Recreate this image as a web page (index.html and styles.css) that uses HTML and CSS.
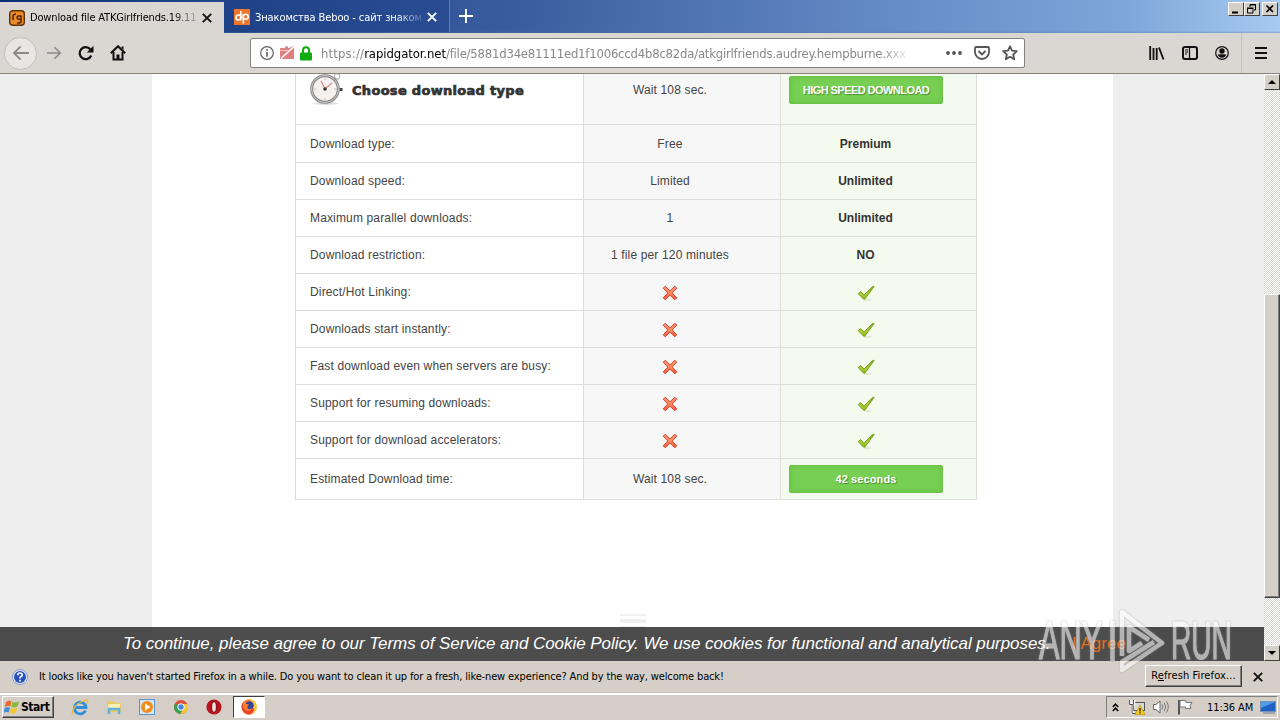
FILE: index.html
```html
<!DOCTYPE html>
<html lang="en">
<head>
<meta charset="utf-8">
<title>Download file</title>
<link rel="stylesheet" href="styles.css">
</head>
<body>
<svg class="defs" width="0" height="0" aria-hidden="true">
  <defs>
    <linearGradient id="redGrad" x1="0" y1="0" x2="0" y2="1"><stop offset="0" stop-color="#f58a6e"/><stop offset="0.5" stop-color="#ff8a62"/><stop offset="1" stop-color="#f0502c"/></linearGradient>
    <linearGradient id="greenGrad" x1="0" y1="0" x2="0" y2="1"><stop offset="0" stop-color="#7ea32c"/><stop offset="0.6" stop-color="#a8d030"/><stop offset="1" stop-color="#86b41c"/></linearGradient>
    <symbol id="cross" viewBox="0 0 16 16"><path d="M3.200 1.200 8 5.800 12.800 1.200 14.800 3.200 10.200 8 14.800 12.800 12.800 14.800 8 10.200 3.200 14.800 1.200 12.800 5.800 8 1.200 3.200z" fill="url(#redGrad)" stroke="#cf4d34" stroke-linejoin="round"/></symbol>
    <symbol id="check" viewBox="0 0 18 16"><path d="M7 15h7" stroke="#cfd6c6"/><path d="M1.200 8.600 3.600 6.600 7 10 15.600 1.400h1.600L7.800 14.200H6.600z" fill="url(#greenGrad)" stroke="#7fa428" stroke-linejoin="round"/></symbol>
  </defs>
</svg>
<div class="screen">
  <header class="tabs">
    <div class="tab tab-active">
      <svg width="16" height="16" viewBox="0 0 16 16"><rect x=".7" y=".7" width="14.6" height="14.6" rx="3" fill="#f08a24" stroke="#5a3210" stroke-width="1.4"/><path d="M4 10V6.500Q4 4 7 4M12.500 6H9.500Q8 6 8 7.500T9.500 9.200H12V6.500V11.500Q12 13 10 13H8" fill="none" stroke="#4a2a10" stroke-width="1.500"/></svg>
      <span class="tab-title t1">Download file ATKGirlfriends.19.11</span>
      <svg class="tab-x" width="10" height="10" viewBox="0 0 10 10"><path d="M.8.800 9.200 9.200M9.200.800.800 9.200" stroke="#111" stroke-width="1.900"/></svg>
    </div>
    <div class="tab tab-back">
      <svg width="16" height="16" viewBox="0 0 16 16"><rect width="16" height="16" fill="#f0752c"/><path d="M6.800 2v9.500M9.300 5v9.500" stroke="#fff" stroke-width="1.600"/><circle cx="4.400" cy="8.500" r="2.500" fill="none" stroke="#fff" stroke-width="1.600"/><circle cx="11.700" cy="7.800" r="2.500" fill="none" stroke="#fff" stroke-width="1.600"/></svg>
      <span class="tab-title t2">Знакомства Beboo - сайт знаком</span>
      <svg class="tab-x" width="10" height="10" viewBox="0 0 10 10"><path d="M.8.800 9.200 9.200M9.200.800.800 9.200" stroke="#fff" stroke-width="1.900"/></svg>
    </div>
    <svg class="plus" width="14" height="14" viewBox="0 0 14 14"><path d="M7 0v14M0 7h14" stroke="#fff" stroke-width="2"/></svg>
    <div class="winbtns">
      <span class="wb"><svg width="14" height="12" viewBox="0 0 14 12"><path d="M3 9.500h6" stroke="#000" stroke-width="2"/></svg></span>
      <span class="wb"><svg width="14" height="12" viewBox="0 0 14 12"><path d="M5 4V1.500h5.500V7H9M5 2h6" fill="none" stroke="#000"/><path d="M2.500 5.500H8V10H2.500zM2 5h6.500" fill="none" stroke="#000"/></svg></span>
      <span class="wb wb-close"><svg width="14" height="12" viewBox="0 0 14 12"><path d="M3.500 2.500 10 9M10 2.500 3.500 9" stroke="#000" stroke-width="1.700"/></svg></span>
    </div>
  </header>

  <div class="toolbar">
    <div class="navs">
      <span class="back"><svg width="18" height="16" viewBox="0 0 18 16"><path d="M17 8H2M8.500 1.500 2 8l6.500 6.500" fill="none" stroke="#8b8b88" stroke-width="1.800"/></svg></span>
      <svg width="16" height="16" viewBox="0 0 18 16"><path d="M1 8h15M9.500 1.500 16 8l-6.500 6.500" fill="none" stroke="#8d8b88" stroke-width="1.900"/></svg>
      <svg width="16" height="16" viewBox="0 0 16 16"><path d="M13.200 10.500A6 6 0 1 1 12.300 4.300" fill="none" stroke="#111" stroke-width="2.200"/><path d="M15.500.800V7.500H8.800z" fill="#111"/></svg>
      <svg width="16" height="16" viewBox="0 0 16 16"><path d="M.8 8.300 8 1.200l7.200 7.100" fill="none" stroke="#111" stroke-width="2"/><path d="M11.500 1.500H13.500V5L11.500 3z" fill="#111"/><path d="M3.500 7V14.500H12.500V7" fill="none" stroke="#111" stroke-width="2"/><path d="M6.500 14.500V9.500h3v5z" fill="#111"/></svg>
    </div>
    <div class="urlbar">
      <svg width="14" height="14" viewBox="0 0 14 14"><circle cx="7" cy="7" r="6.300" fill="none" stroke="#606060" stroke-width="1.200"/><path d="M7 6v4.800M7 3v1.800" stroke="#606060" stroke-width="1.600"/></svg>
      <svg width="14" height="14" viewBox="0 0 14 14"><path d="M0 2h5V0.500h3V2H9l3-1.500L14 0V13H0z" fill="#e08080"/><path d="M1 12.500 14 .5" stroke="#fff" stroke-width="1.500"/><path d="M0 4.500h9" stroke="#f3c5c5"/></svg>
      <svg width="12" height="15" viewBox="0 0 12 15"><path d="M3 7V4.200a3 3 0 0 1 6 0V7" fill="none" stroke="#12ac12" stroke-width="2"/><rect y="6.500" width="12" height="8" rx="1" fill="#12ac12"/></svg>
      <span class="url"><span class="u1">https://</span><span class="u2">rapidgator.net</span><span class="u3">/file/5881d34e81111ed1f1006ccd4b8c82da/atkgirlfriends.audrey.hempburne.xxx</span></span>
      <span class="url-icons">
        <svg width="16" height="4" viewBox="0 0 16 4"><circle cx="2" cy="2" r="1.900" fill="#555"/><circle cx="8" cy="2" r="1.900" fill="#555"/><circle cx="14" cy="2" r="1.900" fill="#555"/></svg>
        <svg width="16" height="14" viewBox="0 0 16 14"><path d="M2 1h12q1 0 1 1v4a7 7 0 0 1-14 0V2q0-1 1-1z" fill="none" stroke="#555" stroke-width="1.800"/><path d="M4.500 5 8 8.500 11.500 5" fill="none" stroke="#555" stroke-width="1.800"/></svg>
        <svg width="16" height="16" viewBox="0 0 16 16"><path d="M8 1.300 10 5.700l4.800.5-3.600 3.300 1 4.800L8 11.800l-4.200 2.500 1-4.800L1.200 6.200 6 5.700z" fill="none" stroke="#555" stroke-width="1.800" stroke-linejoin="round"/></svg>
      </span>
    </div>
    <div class="tools">
      <svg width="16" height="14" viewBox="0 0 16 14"><path d="M1.200 0v14M4.500 2v12M7.700 2v12M10 1.500 14.500 13.500" stroke="#111" stroke-width="1.800"/></svg>
      <svg width="16" height="14" viewBox="0 0 16 14"><rect x="1" y="1" width="14" height="12" rx="2" fill="none" stroke="#111" stroke-width="2"/><path d="M7.500 1v12" stroke="#111" stroke-width="1.300"/><path d="M3 4h3M3 6h3M3 8h2" stroke="#111"/></svg>
      <svg width="14" height="14" viewBox="0 0 14 14"><circle cx="7" cy="7" r="6.300" fill="none" stroke="#111" stroke-width="1.200"/><circle cx="7" cy="5" r="2.700" fill="#111"/><path d="M2.700 8.500Q7 8 11.300 8.500 10 11.800 7 11.800T2.700 8.500z" fill="#111"/></svg>
      <i class="tool-sep"></i>
      <svg width="12" height="12" viewBox="0 0 12 12"><path d="M0 1h12M0 6h12M0 11h12" stroke="#111" stroke-width="2"/></svg>
    </div>
  </div>

  <div class="viewport">
    <main class="page">
      <div class="sheet">
        <div class="table">
          <div class="row row-head">
            <div class="c1 head-cell">
              <svg width="34" height="32" viewBox="0 0 34 32"><ellipse cx="16" cy="29.500" rx="12" ry="1.500" fill="#ddd"/><circle cx="27" cy="2.500" r="2.800" fill="none" stroke="#bbb" stroke-width="1.200"/><path d="m24 7 2-3" stroke="#999" stroke-width="2"/><rect x="29.500" y="14" width="3" height="3" fill="#444"/><circle cx="15" cy="15" r="13.300" fill="#f5f1ef" stroke="#8b8b8b" stroke-width="3"/><circle cx="15" cy="15" r="13.500" fill="none" stroke="#c8c8c8" stroke-width="1"/><path d="M15 4v2M15 24v2M4 15h2M24 15h2" stroke="#bbb"/><path d="M15 15 11 7M15 15l7-6" stroke="#d88" stroke-width="1.200"/><circle cx="15" cy="15" r="1.800" fill="#333"/></svg>
              <h2>Choose download type</h2>
            </div>
            <div class="c2"><span>Wait 108 sec.</span></div>
            <div class="c3"><span class="btn btn-hs">HIGH SPEED DOWNLOAD</span></div>
          </div>
          <div class="row row-first"><div class="c1">Download type:</div><div class="c2">Free</div><div class="c3">Premium</div></div>
          <div class="row"><div class="c1">Download speed:</div><div class="c2">Limited</div><div class="c3">Unlimited</div></div>
          <div class="row"><div class="c1">Maximum parallel downloads:</div><div class="c2">1</div><div class="c3">Unlimited</div></div>
          <div class="row"><div class="c1">Download restriction:</div><div class="c2">1 file per 120 minutes</div><div class="c3">NO</div></div>
          <div class="row"><div class="c1">Direct/Hot Linking:</div><div class="c2"><svg class="mark"><use href="#cross"/></svg></div><div class="c3"><svg class="mark mark-ok"><use href="#check"/></svg></div></div>
          <div class="row"><div class="c1">Downloads start instantly:</div><div class="c2"><svg class="mark"><use href="#cross"/></svg></div><div class="c3"><svg class="mark mark-ok"><use href="#check"/></svg></div></div>
          <div class="row"><div class="c1">Fast download even when servers are busy:</div><div class="c2"><svg class="mark"><use href="#cross"/></svg></div><div class="c3"><svg class="mark mark-ok"><use href="#check"/></svg></div></div>
          <div class="row"><div class="c1">Support for resuming downloads:</div><div class="c2"><svg class="mark"><use href="#cross"/></svg></div><div class="c3"><svg class="mark mark-ok"><use href="#check"/></svg></div></div>
          <div class="row"><div class="c1">Support for download accelerators:</div><div class="c2"><svg class="mark"><use href="#cross"/></svg></div><div class="c3"><svg class="mark mark-ok"><use href="#check"/></svg></div></div>
          <div class="row row-last"><div class="c1">Estimated Download time:</div><div class="c2">Wait 108 sec.</div><div class="c3"><span class="btn">42 seconds</span></div></div>
        </div>
        <div class="stripes"><i class="thin"></i><i></i><i class="tall"></i></div>
      </div>
      <div class="cookie"><span class="cookie-text">To continue, please agree to our Terms of Service and Cookie Policy. We use cookies for functional and analytical purposes.</span><span class="agree">I Agree</span></div>
    </main>
    <div class="scroll">
      <span class="sb"><svg width="8" height="4" viewBox="0 0 8 4"><path d="M0 4 4 0l4 4z"/></svg></span>
      <span class="track"></span>
      <span class="thumb"></span>
      <span class="track track-low"></span>
      <span class="sb"><svg width="8" height="4" viewBox="0 0 8 4"><path d="M0 0h8L4 4z"/></svg></span>
    </div>
    <div class="watermark">
      <span class="wm-any">ANY</span>
      <svg width="56" height="66" viewBox="0 0 56 66"><g fill="none" stroke="#fff" stroke-linejoin="round"><path d="M3.500 13V53" stroke-width="4.500"/><path d="M40 32 20 19V43L33 35M13 48V4L53 35 13 62V54L45 34" stroke-width="4.500"/></g></svg>
      <span class="wm-run">RUN</span>
    </div>
  </div>

  <div class="notice">
    <svg width="16" height="16" viewBox="0 0 16 16"><circle cx="8" cy="8" r="7.500" fill="#e4ebf8" stroke="#7f98cf"/><circle cx="8" cy="8" r="6" fill="#2750bd"/><path d="M5.800 6.300Q5.800 4 8 4t2.200 2.200Q10.200 7.300 8 8.300V9.500M8 10.700v1.700" fill="none" stroke="#fff" stroke-width="1.700"/></svg>
    <span class="notice-text">It looks like you haven't started Firefox in a while. Do you want to clean it up for a fresh, like-new experience? And by the way, welcome back!</span>
    <span class="refresh"><span>R<u>e</u>fresh Firefox...</span></span>
    <svg class="notice-x" width="10" height="10" viewBox="0 0 10 10"><path d="M.8.800 9.200 9.200M9.200.800.800 9.200" stroke="#111" stroke-width="1.900"/></svg>
  </div>

  <footer class="taskbar">
    <span class="start"><svg width="16" height="16" viewBox="0 0 16 16"><path d="M2 3Q5 1 7.500 2.500L6.300 7.500Q4 6.500.800 8z" fill="#ee6a2c"/><path d="M8.500 3Q11 4.300 15 2.500L13.500 7.500Q10.500 9 7.300 7.800z" fill="#86b93a"/><path d="M.6 9Q3.500 7.500 6 8.700L4.800 13.500Q2.500 12.500 0 13.800z" fill="#3e8fd8"/><path d="M7 9Q10 10 13.200 8.700L12 13.500Q9 15.500 5.800 14z" fill="#f6c52e"/></svg>Start</span>
    <span class="quick">
      <svg width="18" height="18" viewBox="0 0 18 18"><path d="M14.500 12.500A5.800 5.800 0 1 1 15 9.500H5" fill="none" stroke="#2f8fdc" stroke-width="2.800"/><path d="M2 15.500Q0 17 2.500 11T15 2q3-.5 1 4" fill="none" stroke="#e9bd3a" stroke-width="1.300"/></svg>
      <svg width="18" height="18" viewBox="0 0 18 18"><path d="M2 3h6l1 2h7v9H2z" fill="#eacb62"/><path d="M3 6h12v5H3z" fill="#faf0b0"/><path d="M4 16v-5h10v5" fill="none" stroke="#62b1e0" stroke-width="2.500"/></svg>
      <svg width="18" height="18" viewBox="0 0 18 18"><rect x="1.500" y="1.500" width="15" height="15" fill="#d2e6f6" stroke="#5795cc"/><circle cx="9" cy="9" r="6" fill="#f28c1c"/><path d="M7 5.500 12.500 9 7 12.500z" fill="#fff"/></svg>
      <svg width="18" height="18" viewBox="0 0 18 18"><circle cx="9" cy="9" r="7" fill="#e24a3a"/><path d="M9 9 3 5.500A7 7 0 0 0 8.500 16L12 10z" fill="#35a150"/><path d="M9 9h3L8.500 16A7 7 0 0 0 15.500 6H9z" fill="#f7ca30"/><circle cx="9" cy="9" r="3.300" fill="#4586e8" stroke="#fff"/></svg>
      <svg width="18" height="18" viewBox="0 0 18 18"><circle cx="9" cy="9" r="7.600" fill="#b8141c"/><ellipse cx="9" cy="9" rx="2.400" ry="5.300" fill="#efe0de" stroke="#76080e"/></svg>
    </span>
    <span class="task-active"><svg width="18" height="18" viewBox="0 0 18 18"><circle cx="9" cy="9" r="7.700" fill="#f9802a"/><path d="M10 1Q16.700 3 16.700 9T9 16.700Q15 13 10 1z" fill="#ffc83a"/><path d="M2 5Q0 14 8 16.500 14 16 14 10L6 12z" fill="#ec4233"/><circle cx="9.500" cy="7.500" r="4.200" fill="#35439d"/><path d="M3 3.500 6 6 9 6.500 7 9.500Q9 12.500 12.500 10 10 14.500 6 12.500T3 3.500z" fill="#ff7d2a"/></svg></span>
    <span class="tray">
      <svg class="chev" width="7" height="9" viewBox="0 0 7 9"><path d="M.8 4 3.500 1.200 6.200 4M.8 8 3.500 5.200 6.200 8" fill="none" stroke="#000" stroke-width="1.500"/></svg>
      <svg width="16" height="16" viewBox="0 0 16 16"><rect x="4.500" y="3.500" width="11" height="8" fill="#d9d9d4" stroke="#555"/><path d="M1 1v4h4V1M3 5v9h3" fill="none" stroke="#fff" stroke-width="2.500"/><path d="M.5 1v4.500h4V1M3 6v8.500h4" fill="none" stroke="#555"/><path d="m11 6 5 9.500H6z" fill="#f6cf1d" stroke="#b48a00" stroke-width=".6"/><path d="M11 9v3.500M11 13.200v1.300" stroke="#222" stroke-width="1.300"/></svg>
      <svg width="16" height="16" viewBox="0 0 16 16"><path d="M.5 5.500H3l4-3.500v12L3 10.500H.5z" fill="#fff" stroke="#666"/><path d="M9 5.500q1.500 2.500 0 5M11.300 3.800q2.700 4.200 0 8.400M13.500 2.500q3.500 5.500 0 11" fill="none" stroke="#777"/></svg>
      <svg width="16" height="16" viewBox="0 0 16 16"><path d="M2 1v14.500" stroke="#555" stroke-width="2"/><path d="M3 1.500h6V3.500h6L13 6.500l1 3H8.500V8H3z" fill="#fff" stroke="#777"/></svg>
      <span class="clock">11:36 AM</span>
      <svg width="16" height="14" viewBox="0 0 16 14"><rect x=".5" y="1.500" width="15" height="10" fill="#1f62c4" stroke="#7090b8"/><path d="M1 2h14L1 8z" fill="#4f9be8"/><path d="M3 13h12" stroke="#6c7c90"/></svg>
    </span>
  </footer>
</div>
</body>
</html>
```

FILE: styles.css
```css
* { box-sizing: border-box; }
body { margin: 0; overflow: hidden; background: #d4d0c8; }
svg { display: block; flex: none; }
.defs { position: absolute; }
.screen { width: 1280px; height: 720px; display: flex; flex-direction: column; font: 11px "DejaVu Sans Condensed", "DejaVu Sans", sans-serif; font-stretch: condensed; color: #000; overflow: hidden; white-space: nowrap; }

/* tab strip */
.tabs { height: 33px; flex: none; display: flex; align-items: flex-start; background: linear-gradient(#0a246a00 94%, #5570a066 100%), linear-gradient(90deg, #0f2c78 0, #284b90 20%, #3a5c9f 40%, #5f84c0 65%, #7fa6da 88%, #a6caf0 100%); }
.tab { display: flex; align-items: center; }
.tab-active { width: 224px; height: 31px; margin-top: 2px; background: #dad6d1; padding: 0 12px 0 9px; }
.tab-back { width: 226px; height: 32px; padding: 2px 12px 0 10px; color: #fff; background: linear-gradient(90deg, #1f4287, #2a4c92); border-right: 1px solid #5b7bb3; }
.tab-title { flex: 1; margin: 0 6px 0 5px; overflow: hidden; -webkit-mask-image: linear-gradient(90deg, #000 85%, #0003 100%); mask-image: linear-gradient(90deg, #000 85%, #0003 100%); }
.t1 { letter-spacing: -.16px; }
.t2 { letter-spacing: -.1px; }
.plus { margin: 9px 0 0 9px; }
.winbtns { margin: 2px 2px 0 auto; display: flex; }
.wb { width: 16px; height: 14px; background: #d4d0c8; border: 1px solid; border-color: #fff #404040 #404040 #fff; }
.wb-close { margin-left: 2px; }

/* navigation toolbar */
.toolbar { height: 41px; flex: none; display: flex; align-items: center; background: #dad6d1; border-bottom: 1px solid #85827c; }
.navs { width: 250px; display: flex; align-items: center; gap: 16px; padding-left: 4px; }
.back { width: 33px; height: 33px; border-radius: 50%; background: #e8e6e2; border: 1px solid #c2bfba; display: flex; align-items: center; justify-content: center; margin-right: -7px; }
.urlbar { width: 775px; height: 30px; background: #fff; border: 1px solid #828282; border-radius: 2px; display: flex; align-items: center; padding: 0 6px 0 9px; gap: 6px; }
.url { font-size: 13px; color: #888; margin-left: 3px; width: 584px; overflow: hidden; -webkit-mask-image: linear-gradient(90deg, #000 96%, #0003 100%); mask-image: linear-gradient(90deg, #000 96%, #0003 100%); }
.u1 { letter-spacing: .15px; }
.u2 { color: #000; letter-spacing: -.08px; }
.u3 { letter-spacing: -.22px; }
.url-icons { margin-left: auto; display: flex; align-items: center; gap: 12px; }
.tools { margin-left: auto; display: flex; align-items: center; gap: 17px; padding-right: 13px; }
.tool-sep { width: 1px; height: 40px; background: #c6c2bd; margin: 0 -4px 0 -5px; }

/* browser viewport */
.viewport { position: relative; z-index: 1; height: 587px; flex: none; display: flex; }
.page { position: relative; width: 1264px; background: #eee; padding-left: 152px; overflow: hidden; }
.sheet { width: 961px; height: 587px; background: #fff; padding-left: 143px; }
.table { width: 682px; font: 12px "Liberation Sans", Arial, sans-serif; color: #444; letter-spacing: .15px; }
.row { display: grid; grid-template-columns: 288px 197px 197px; height: 37px; }
.row > div { border-left: 1px solid #ddd; border-bottom: 1px solid #ddd; display: flex; align-items: center; }
.row > .c1 { padding-left: 14px; }
.row > .c2 { background: #f7f7f7; justify-content: center; padding-right: 24px; }
.row > .c3 { background: #f4faee; border-color: #dde0d6; border-right: 1px solid #dde0d6; justify-content: center; padding-right: 26px; font-weight: bold; color: #333; letter-spacing: 0; }
.row-head { height: 51px; }
.row-head > div { align-items: flex-start; }
.row-head > .c2 { padding-top: 9px; }
.row-head > .c3 { padding-top: 2px; padding-right: 25px; }
.head-cell h2 { margin: 9px 0 0 8px; font: 900 13px "DejaVu Sans", sans-serif; letter-spacing: .3px; color: #333; -webkit-text-stroke: .7px #333; }
.row-first { height: 38px; }
.row-last { height: 41px; }
.row-last > .c3 { padding-right: 25px; }
.btn { width: 154px; height: 28px; border-radius: 2px; background: #77cf53; border: 1px solid #6cc348; box-shadow: inset 0 0 5px #66c044; color: #fff; font-size: 11px; letter-spacing: .1px; text-shadow: 1px 1px 1px #4b8f30; display: flex; align-items: center; justify-content: center; }
.btn-hs { letter-spacing: -.55px; }
.mark { width: 16px; height: 16px; margin-top: 2px; }
.mark-ok { width: 18px; }
.stripes { width: 26px; margin: 114px 0 0 325px; display: grid; gap: 3px; }
.stripes i { height: 4px; background: #f0f0f0; }
.stripes .thin { height: 2px; }
.stripes .tall { height: 30px; }

/* consent bar lying over the page */
.cookie { position: absolute; left: 0; bottom: 0; width: 1264px; height: 34px; background: rgba(51, 51, 51, .87); color: #fff; display: flex; align-items: center; padding-left: 123px; font: 17px "Liberation Sans", Arial, sans-serif; }
.cookie-text { font-style: italic; width: 924px; letter-spacing: -.05px; }
.agree { margin-left: 25px; font-size: 17px; color: #e2711d; }

/* scrollbar */
.scroll { width: 16px; display: flex; flex-direction: column; background: #ebe8e4; }
.sb { height: 16px; background: #d4d0c8; border: 1px solid; border-color: #fff #404040 #404040 #fff; display: flex; align-items: center; justify-content: center; }
.track { height: 204px; background: repeating-conic-gradient(#d8d4ce 0 25%, #fff 0 50%) 0 0 / 2px 2px; }
.track-low { height: 47px; }
.thumb { flex: 1; background: #d4d0c8; border: 1px solid; border-color: #fff #404040 #404040 #fff; box-shadow: inset -1px -1px #808080; }

/* translucent overlay mark */
.watermark { position: absolute; left: 1039px; top: 534px; height: 66px; display: flex; align-items: center; color: #fff; opacity: .58; filter: drop-shadow(0 0 1px #888); font: 53px/66px "Liberation Sans", sans-serif; -webkit-text-stroke: 1.200px #fff; }
.watermark svg { margin: 0 6px 0 5px; }
.wm-any, .wm-run { display: block; width: 65px; transform: scaleX(.58); transform-origin: 0 50%; }
.wm-run { width: 60px; transform: scaleX(.53); }

/* notification bar */
.notice { height: 32px; flex: none; display: flex; align-items: center; background: #d5cfc7; padding: 0 17px 0 12px; border-bottom: 1px solid #c8c3bc; }
.notice-text { margin-left: 11px; letter-spacing: -.14px; }
.refresh { margin: -2px 0 0 auto; width: 97px; height: 22px; border: 1px solid; border-color: #fff #404040 #404040 #fff; box-shadow: inset -1px -1px #808080; display: flex; align-items: center; justify-content: center; }
.refresh span { letter-spacing: .1px; }
.notice-x { margin-left: 11px; }

/* taskbar */
.taskbar { flex: 1; display: flex; align-items: center; background: #d5cec6; border-top: 2px solid #fff; padding: 0 2px 1px; }
.start { width: 52px; height: 22px; border: 1px solid; border-color: #fff #404040 #404040 #fff; box-shadow: inset -1px -1px #808080; display: flex; align-items: center; gap: 1px; padding-left: 1px; font-weight: bold; font-size: 12px; letter-spacing: -.45px; }
.quick { display: flex; gap: 15.500px; margin-left: 17px; }
.task-active { width: 32px; height: 22px; margin-left: 10px; background: #fff; border: 1px solid; border-color: #404040 #fff #fff #404040; display: flex; align-items: center; justify-content: center; }
.tray { margin-left: auto; width: 172px; height: 22px; border: 1px solid; border-color: #808080 #fff #fff #808080; display: flex; align-items: center; gap: 8px; padding-left: 5px; }
.chev { margin-right: 2px; }
.clock { margin: 0 -1px 0 6px; letter-spacing: -.1px; }
```
